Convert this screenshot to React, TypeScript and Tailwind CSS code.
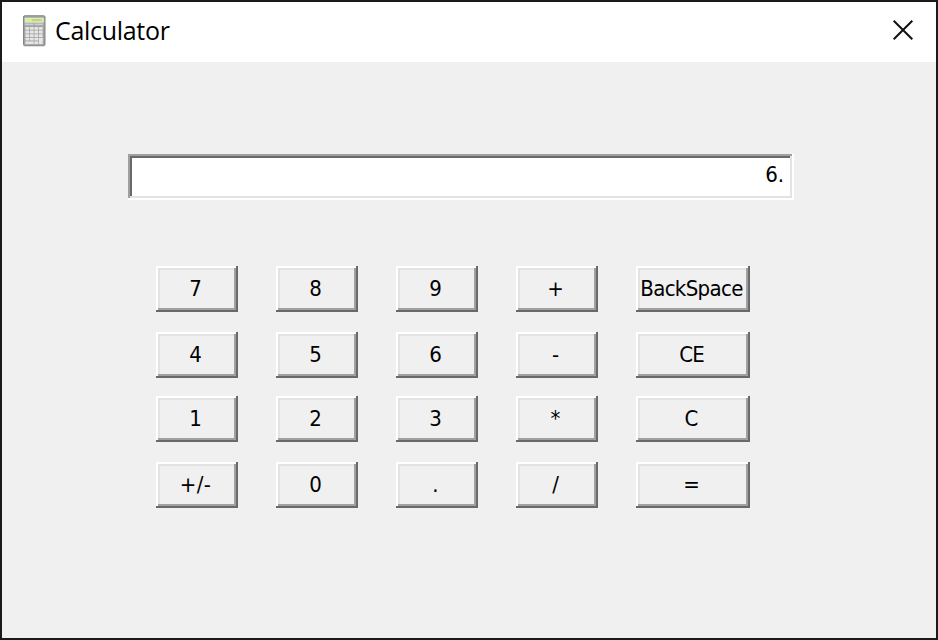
import React from "react";

const rows: { keys: string[]; gap: string }[] = [
  { keys: ["7", "8", "9", "+", "BackSpace"], gap: "mt-[66px]" },
  { keys: ["4", "5", "6", "-", "CE"], gap: "mt-5" },
  { keys: ["1", "2", "3", "*", "C"], gap: "mt-[18px]" },
  { keys: ["+/-", "0", ".", "/", "="], gap: "mt-5" },
];

const tracking: Record<string, string> = {
  BackSpace: "tracking-[-0.65px]",
  CE: "tracking-[-1px]",
  "+/-": "tracking-[0.3px]",
};

const uiFont =
  "font-['DejaVu_Sans_Condensed','DejaVu_Sans',sans-serif] [font-stretch:condensed]";

function KeyButton({ label, wide }: { label: string; wide: boolean }) {
  return (
    <button
      type="button"
      className={`flex h-[46px] items-center justify-center whitespace-nowrap bg-[#f0f0f0] pr-[3px] text-[22px] leading-none text-black shadow-[inset_-2px_-2px_#696969,inset_2px_2px_#fff,inset_-4px_-4px_#a0a0a0,inset_4px_4px_#e3e3e3] ${
        wide ? "w-[114px]" : "w-[82px]"
      }`}
    >
      <span className={tracking[label] ?? ""}>{label}</span>
    </button>
  );
}

function CalculatorIcon() {
  return (
    <svg width="24" height="32" viewBox="0 0 24 32" className="block">
      <rect x="1.5" y="0.75" width="21.5" height="30" rx="1.2" fill="#a2a2a2" stroke="#868686" strokeWidth="1" />
      <rect x="3" y="3" width="18.5" height="4.3" fill="#d5ec9c" stroke="#eef5dc" strokeWidth="0.5" />
      <path d="M10 5h9.5" stroke="#9bb070" strokeWidth="1" strokeDasharray="1.6 0.5" />
      <path d="M3 9.4h8.6M12.6 9.4h8.6" stroke="#cdcdcd" strokeWidth="1.8" />
      {[13.4, 17, 20.6, 24.2].map((y) =>
        [3.4, 7.9, 12.4, 16.9].map((x) => (
          <rect key={`${x}-${y}`} x={x} y={y - 1.4} width="3.8" height="2.8" rx="0.4" fill="#e6e6e6" />
        )),
      )}
      <rect x="3.4" y="26.4" width="8.3" height="2.7" fill="#e6e6e6" />
      <rect x="12.4" y="26.4" width="3.8" height="2.7" fill="#e6e6e6" />
      <rect x="16.9" y="23.4" width="3.8" height="5.7" fill="#e6e6e6" />
    </svg>
  );
}

export default function App() {
  return (
    <div className="flex h-[640px] w-[938px] flex-col overflow-hidden border-2 border-[#1a1a1c] bg-[#f0f0f0]">
      <header className="flex h-[60px] shrink-0 items-center justify-between bg-white pl-5 pr-[23px]">
        <div className="flex items-center gap-[9px] pb-[2px]">
          <CalculatorIcon />
          <h1 className="pb-[2px] font-['Open_Sans','Noto_Sans',sans-serif] text-[25px] leading-none tracking-[-0.3px] text-black">
            Calculator
          </h1>
        </div>
        <button type="button" aria-label="Close" className="mb-1">
          <svg width="20" height="20" viewBox="0 0 20 20" className="block">
            <path d="M0.7 0.7 19.3 19.3M19.3 0.7 0.7 19.3" stroke="#111" strokeWidth="2" />
          </svg>
        </button>
      </header>
      <main className={`flex flex-col pt-[92px] ${uiFont}`}>
        <div className="ml-[126px] flex h-[46px] w-[666px] items-center justify-end bg-white pb-[4px] pr-[10px] text-[22px] leading-none text-black shadow-[inset_-2px_-2px_#fff,inset_2px_2px_#a0a0a0,inset_-4px_-4px_#e3e3e3,inset_4px_4px_#696969]">
          6.
        </div>
        {rows.map(({ keys, gap }) => (
          <div key={keys[0]} className={`ml-[154px] flex gap-[38px] ${gap}`}>
            {keys.map((label, i) => (
              <KeyButton key={label} label={label} wide={i === 4} />
            ))}
          </div>
        ))}
      </main>
    </div>
  );
}
